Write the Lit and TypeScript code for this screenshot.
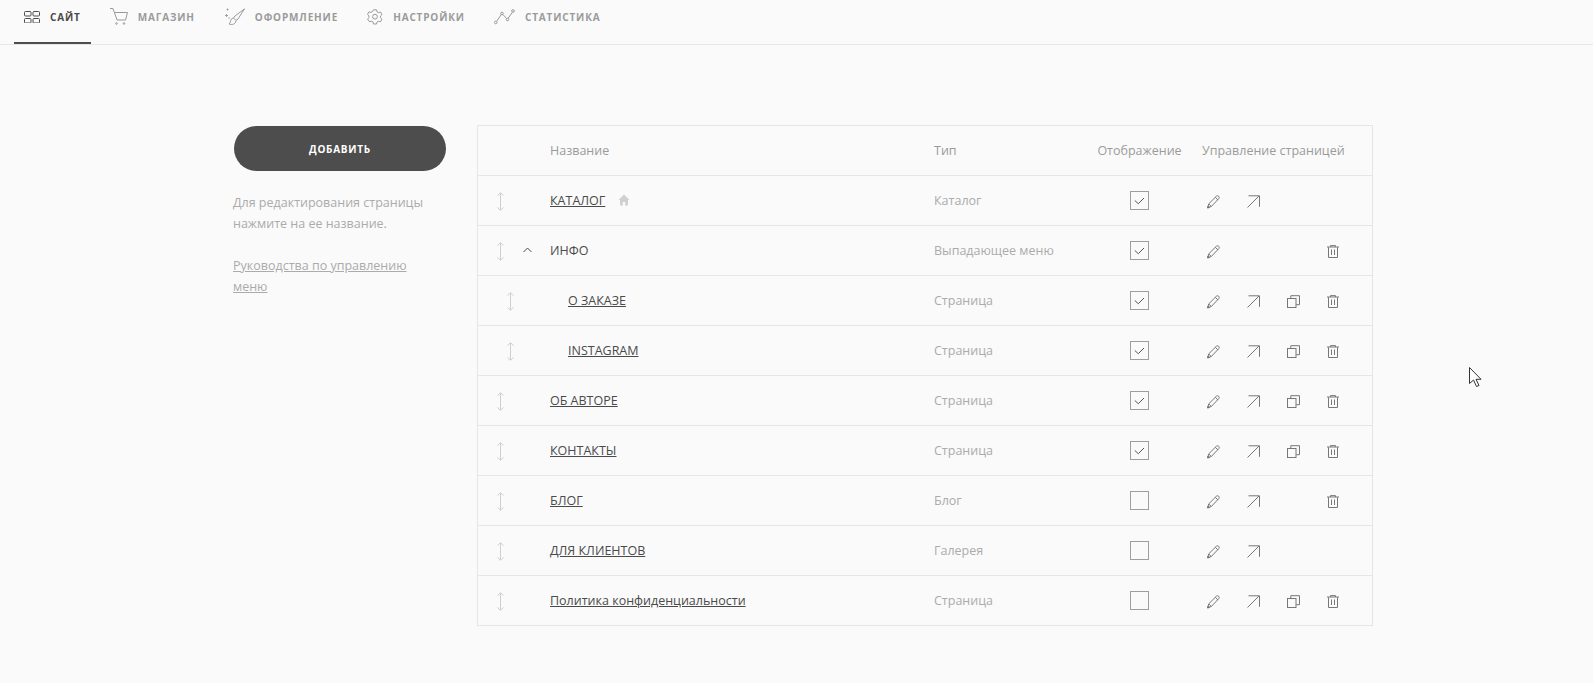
import { LitElement, html, css, svg } from "lit";
import { customElement } from "lit/decorators.js";

const s = (w: number, h: number, body: unknown, cls = "") =>
  html`<svg class=${cls} width=${w} height=${h} viewBox="0 0 ${w} ${h}" fill="none" stroke="currentColor" stroke-width="1">${body}</svg>`;

const icons = {
  site: s(16, 12, svg`<rect x=".5" y=".5" width="6.5" height="4.5" rx="1"/><rect x="9" y=".5" width="6.5" height="4.5" rx="1"/><rect x=".5" y="7.5" width="6.5" height="4.5" rx="1"/><rect x="9" y="7.5" width="6.5" height="4.5" rx="1"/>`),
  shop: s(18, 17, svg`<path d="M0 .5h3l4 11.500h8.500M5 4.500h12.500L15.500 12"/><circle cx="6.500" cy="15.500" r=".8"/><circle cx="14" cy="15.500" r=".8"/>`),
  brush: s(21, 18, svg`<path d="M20.500 .8 11 8l-1.500 2 2.500 2.500 2-1.500zM9.500 10c-2.500.5-2.500 1.500-3 3.500-.3 1.200-.8 2-1.500 2.500 3 1.200 6.500.5 7-3.500"/><path d="M1 7.500h3M2.500 6v3M3.500.5v2M2.500 1.500h2" stroke-width=".9"/><circle cx="5" cy="10" r=".7" fill="currentColor" stroke="none"/>`),
  gear: s(16, 16, svg`<path d="M6.500.8h3l.5 2 1.500.8 2-.6 1.500 2.600-1.500 1.400v1.800l1.500 1.400-1.500 2.600-2-.6-1.500.8-.5 2h-3l-.5-2-1.500-.8-2 .6L.5 10l1.500-1.400V6.800L.5 5.400 2 2.800l2 .6 1.500-.8z"/><circle cx="8" cy="7.700" r="2.400"/>`),
  stats: s(21, 16, svg`<circle cx="1.800" cy="13.500" r="1.300"/><circle cx="8" cy="4.500" r="1.300"/><circle cx="13.500" cy="10.500" r="1.300"/><circle cx="19" cy="2" r="1.300"/><path d="M2.600 12.400 7.200 5.600M8.900 5.500l3.700 4M14.100 9.300l4.300-6"/>`),
  move: s(9, 19, svg`<path d="M4.500 1v17M1.500 3.500 4.500.8l3 2.700M1.500 15.500l3 2.700 3-2.700"/>`),
  chevron: s(9, 6, svg`<path d="m.5 5 4-4 4 4"/>`),
  home: html`<svg width="12" height="12" viewBox="0 0 12 12" fill="#d0d0d0"><path d="M6 .5.5 6H2v5.500h2.800V8h2.400v3.500H10V6h1.500z"/></svg>`,
  check: s(11, 8, svg`<path d="m.8 3.500 3.500 3.200L10 1"/>`),
  pencil: s(14, 14, svg`<path d="M1.800 12.700l.9-3.800L10.300 1.300c.7-.7 1.700-.7 2.400 0 .7.700.7 1.700 0 2.400L5.300 11.500zM2.700 8.900l2.600 2.600M9.300 2.300l2.800 2.800"/><path d="m1.500 13 .5-2 1.500 1.500z" fill="currentColor"/>`),
  arrow: s(13, 13, svg`<path d="M.5 12.500 12 1M1.500.8h11v11"/>`),
  copy: s(13, 13, svg`<rect x=".5" y="3.500" width="8.500" height="9" /><path d="M3.800 3.300V.7H12.500v9H9.200"/>`),
  trash: s(12, 13, svg`<path d="M0 2h12M3.500 2V.6h5V2M1.500 2.300v10.200h9V2.300M4.500 4.500v5.500M7.500 4.500v5.500"/>`),
};

interface Row { name: string; type: string; link?: boolean; nested?: boolean; home?: boolean; open?: boolean; shown: boolean; a: string }
const rows: Row[] = [
  { name: "КАТАЛОГ", type: "Каталог", link: true, home: true, shown: true, a: "pe" },
  { name: "ИНФО", type: "Выпадающее меню", open: true, shown: true, a: "pt" },
  { name: "О ЗАКАЗЕ", type: "Страница", link: true, nested: true, shown: true, a: "peyt" },
  { name: "INSTAGRAM", type: "Страница", link: true, nested: true, shown: true, a: "peyt" },
  { name: "ОБ АВТОРЕ", type: "Страница", link: true, shown: true, a: "peyt" },
  { name: "КОНТАКТЫ", type: "Страница", link: true, shown: true, a: "peyt" },
  { name: "БЛОГ", type: "Блог", link: true, shown: false, a: "pet" },
  { name: "ДЛЯ КЛИЕНТОВ", type: "Галерея", link: true, shown: false, a: "pe" },
  { name: "Политика конфиденциальности", type: "Страница", link: true, shown: false, a: "peyt" },
];

@customElement("app-root")
export class AppRoot extends LitElement {
  static styles = css`
    :host { display: block; min-height: 683px; background: #fafafa; color: #4a4a4a; font-family: "Open Sans", sans-serif; position: relative; overflow: hidden; }
    nav { display: flex; height: 45px; box-sizing: border-box; border-bottom: 1px solid #e6e6e6; padding-left: 14px; gap: 9px; }
    .tab { display: flex; align-items: center; gap: 10px; height: 44px; box-sizing: border-box; padding: 0 10px 9px; font-size: 10px; font-weight: 700; letter-spacing: .85px; color: #9a9a9a; border-bottom: 2px solid transparent; }
    .tab.on { color: #4a4a4a; border-bottom-color: #4d4d4d; }
    .tab svg { display: block; }
    main { display: flex; gap: 31px; padding: 80px 0 0 233px; }
    aside { width: 213px; font-size: 12.5px; line-height: 21px; color: #ababab; }
    .add { display: flex; align-items: center; justify-content: center; box-sizing: border-box; width: 212px; height: 45px; margin: 1px 0 0 1px; padding-bottom: 1px; border: 0; border-radius: 23px; background: #4d4d4d; color: #fff; font: 700 10px "Open Sans", sans-serif; letter-spacing: .75px; }
    aside p { margin: 21px 0 21px; }
    aside a { color: #ababab; text-decoration: underline; }
    .table { width: 896px; box-sizing: border-box; border: 1px solid #e6e6e6; }
    .row { display: grid; grid-template-columns: 72px 384px 161px 89px 1fr; height: 50px; box-sizing: border-box; align-items: center; border-top: 1px solid #e6e6e6; font-size: 12.5px; }
    .row.head { border-top: 0; height: 49px; color: #9a9a9a; padding-top: 0; }
    .head .center { text-align: center; white-space: nowrap; }
    .head .mgmt { padding-left: 18px; white-space: nowrap; }
    .handle { position: relative; display: flex; height: 100%; align-items: center; padding: 1px 0 0 18px; box-sizing: border-box; color: #cfcfcf; }
    .handle.nested { padding-left: 28px; }
    .chev { position: absolute; left: 45px; top: 21px; line-height: 0; color: #4a4a4a; }
    .name { display: flex; align-items: center; gap: 13px; color: #4a4a4a; padding-bottom: 1px; }
    .name.nested { padding-left: 18px; }
    .name a { color: #4a4a4a; text-decoration: underline; }
    .type { color: #ababab; padding-bottom: 1px; }
    .box { justify-self: center; display: flex; align-items: center; justify-content: center; width: 19px; height: 19px; box-sizing: border-box; border: 1px solid #9e9e9e; color: #555; }
    .acts { display: grid; grid-template-columns: repeat(4, 40px); padding: 2px 0 0 9px; color: #777; }
    .acts span { display: flex; justify-content: center; }
    .cursor { position: absolute; left: 1469px; top: 367px; }
  `;

  private act(on: boolean, icon: unknown) {
    return html`<span>${on ? icon : ""}</span>`;
  }

  render() {
    const tabs: [string, unknown][] = [["САЙТ", icons.site], ["МАГАЗИН", icons.shop], ["ОФОРМЛЕНИЕ", icons.brush], ["НАСТРОЙКИ", icons.gear], ["СТАТИСТИКА", icons.stats]];
    return html`
      <nav>${tabs.map(([t, i], n) => html`<div class="tab ${n === 0 ? "on" : ""}">${i}<span>${t}</span></div>`)}</nav>
      <main>
        <aside>
          <button class="add">ДОБАВИТЬ</button>
          <p>Для редактирования страницы<br />нажмите на ее название.</p>
          <p><a>Руководства по управлению<br />меню</a></p>
        </aside>
        <div class="table">
          <div class="row head">
            <div></div><div>Название</div><div>Тип</div><div class="center">Отображение</div><div class="mgmt">Управление страницей</div>
          </div>
          ${rows.map((r) => html`
            <div class="row">
              <div class="handle ${r.nested ? "nested" : ""}">${icons.move}${r.open ? html`<span class="chev">${icons.chevron}</span>` : ""}</div>
              <div class="name ${r.nested ? "nested" : ""}">${r.link ? html`<a>${r.name}</a>` : r.name}${r.home ? icons.home : ""}</div>
              <div class="type">${r.type}</div>
              <div class="box">${r.shown ? icons.check : ""}</div>
              <div class="acts">
                ${this.act(r.a.includes("p"), icons.pencil)}${this.act(r.a.includes("e"), icons.arrow)}${this.act(r.a.includes("y"), icons.copy)}${this.act(r.a.includes("t"), icons.trash)}
              </div>
            </div>`)}
        </div>
      </main>
      <svg class="cursor" width="13" height="21" viewBox="0 0 13 21"><path d="M.5.5v16l4-3.500 3 6.500 2.500-1-3-6.200h5z" fill="#fff" stroke="#333" stroke-width="1"/></svg>
    `;
  }
}
